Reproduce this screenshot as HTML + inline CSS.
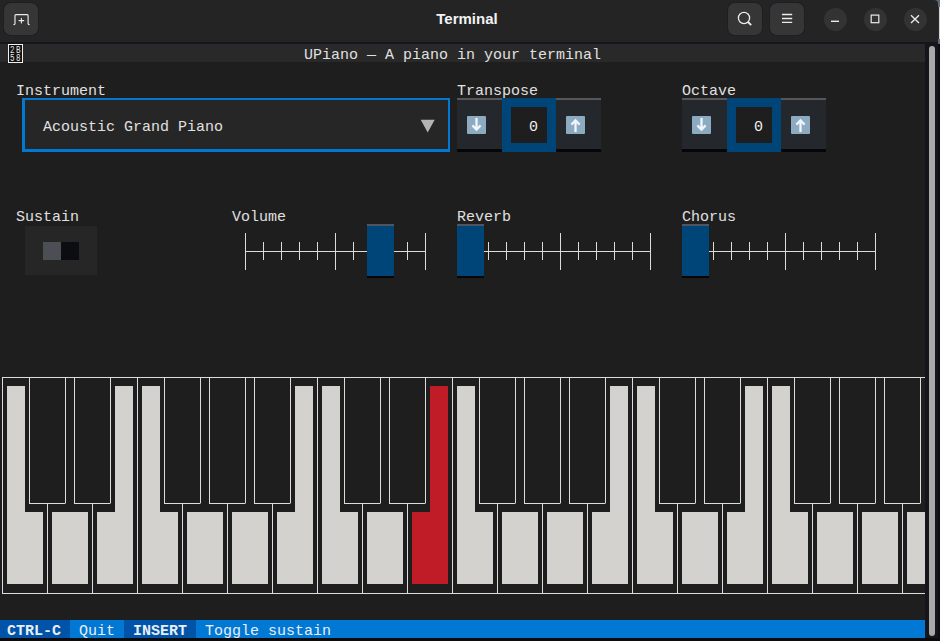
<!DOCTYPE html>
<html><head><meta charset="utf-8"><style>
html,body{margin:0;padding:0;width:940px;height:641px;overflow:hidden;background:#1a1d26}
body>div,body>svg{position:absolute}
.t{position:absolute;font-family:"Liberation Mono",monospace;font-size:15px;line-height:18px;white-space:pre}
.hex{position:absolute;font-family:"Liberation Mono",monospace;font-size:10.5px;line-height:10px;color:#e6e6e6;transform:scaleX(0.72);transform-origin:0 0}
.title{position:absolute;left:0;top:0.3px;width:934px;height:37px;line-height:37px;text-align:center;font-family:"Liberation Sans",sans-serif;font-weight:bold;font-size:15px;color:#f2f2f2}
</style></head><body>

<div style="left:0;top:0;width:940px;height:641px;background:#0e0d12"></div>
<div style="left:900px;top:0;width:40px;height:44px;background:#5a6878"></div>
<div style="left:938px;top:7px;width:1px;height:32px;background:#2a2a30"></div>
<div style="left:939px;top:7px;width:1px;height:32px;background:#cfcfcf"></div>
<div style="left:0;top:0;width:938px;height:42px;background:#242424;border-top-right-radius:4px"></div>
<div style="left:0;top:42px;width:938px;height:2px;background:#17141f"></div>
<div style="left:4px;top:3px;width:34px;height:32px;border-radius:7px;background:#363636;box-shadow:0 0 0 1px #1f1d26"></div>
<svg style="position:absolute;left:0;top:0" width="940" height="44">
 <g fill="none" stroke="#ececec" stroke-width="1.3" stroke-linecap="round">
  <path d="M13.9 24.6 Q15 24.6 15 23.6 V15.6 Q15 14.6 16 14.6 H27.1 Q28.1 14.6 28.1 15.6 V23.6 Q28.1 24.6 29.2 24.6" stroke-width="1.15"/>
  <path d="M21.4 18.2 V23 M19 20.6 H23.8" stroke-width="1.1"/>
 </g>
</svg>
<div style="left:728px;top:3px;width:34px;height:32px;border-radius:7px;background:#363636;box-shadow:0 0 0 1px #1f1d26"></div>
<div style="left:770px;top:3px;width:34px;height:32px;border-radius:7px;background:#363636;box-shadow:0 0 0 1px #1f1d26"></div>
<div style="left:823.5px;top:7.5px;width:23px;height:23px;border-radius:50%;background:#333333"></div>
<div style="left:863.5px;top:7.5px;width:23px;height:23px;border-radius:50%;background:#333333"></div>
<div style="left:903.5px;top:7.5px;width:23px;height:23px;border-radius:50%;background:#333333"></div>
<svg style="position:absolute;left:0;top:0" width="940" height="44">
 <g fill="none" stroke="#ececec" stroke-width="1.3">
  <circle cx="744" cy="18" r="5.6"/>
  <path d="M748 22 L751.2 25.2" stroke-width="1.8"/>
  <path d="M782 14.5 H792.2 M782 18.5 H792.2 M782 22.4 H792.2" stroke-width="1.4"/>
  <path d="M831 21.3 H839" stroke-width="1.4"/>
  <rect x="871.2" y="15.1" width="7.6" height="7.6" stroke-width="1.2"/>
  <path d="M911 15.2 L919 23 M919 15.2 L911 23" stroke-width="1.3"/>
 </g>
</svg>
<div class="title">Terminal</div>

<div style="left:0px;top:44px;width:925px;height:594px;background:#1e1e1e;"></div>
<div style="left:0px;top:638px;width:938px;height:3px;background:#0b0a0d;"></div>
<div style="left:925px;top:44px;width:13px;height:594px;background:#16141c;"></div>
<div style="left:929px;top:46px;width:6px;height:590px;background:#a9a9a9;border-radius:3px;"></div>
<div style="left:0px;top:44px;width:925px;height:18px;background:#292929;"></div>
<div style="left:8px;top:44px;width:13px;height:17px;border:1px solid #f0f0f0;background:#111"></div>
<div class="hex" style="left:9.6px;top:45px">2</div>
<div class="hex" style="left:15.9px;top:45px">B</div>
<div class="hex" style="left:9.6px;top:53px">5</div>
<div class="hex" style="left:15.9px;top:53px">8</div>
<div class="t" style="left:304px;top:47px;color:#e0e0e0;">UPiano — A piano in your terminal</div>
<div class="t" style="left:16px;top:83px;color:#e0e0e0;">Instrument</div>
<div class="t" style="left:457px;top:83px;color:#e0e0e0;">Transpose</div>
<div class="t" style="left:682px;top:83px;color:#e0e0e0;">Octave</div>
<div style="left:22px;top:98px;width:428px;height:54px;background:#0178d4;"></div>
<div style="left:25px;top:100px;width:423px;height:49px;background:#262626;"></div>
<div class="t" style="left:43px;top:119px;color:#e0e0e0;">Acoustic Grand Piano</div>
<svg style="position:absolute;left:0;top:0" width="940" height="200"><path d="M420.7 119.7 H434.7 L427.7 132.6 Z" fill="#b4b4b4"/></svg>
<div style="left:457px;top:98px;width:45px;height:2px;background:#55575b;"></div>
<div style="left:457px;top:100px;width:45px;height:49px;background:#24272c;"></div>
<div style="left:457px;top:149px;width:45px;height:3px;background:#050608;"></div>
<div style="left:556px;top:98px;width:45px;height:2px;background:#55575b;"></div>
<div style="left:556px;top:100px;width:45px;height:49px;background:#24272c;"></div>
<div style="left:556px;top:149px;width:45px;height:3px;background:#050608;"></div>
<div style="left:502px;top:98px;width:54px;height:54px;background:#004578;"></div>
<div style="left:511px;top:107px;width:36px;height:36px;background:#1e1e1e;"></div>
<div class="t" style="left:529px;top:119px;color:#f0f0f0;">0</div>
<div style="left:467px;top:116px;width:19px;height:18px;background:#8dabc0;border-radius:1px"></div>
<svg style="position:absolute;left:0;top:0" width="940" height="200"><path d="M476.5 118 V129 M472.4 125.4 L476.5 129.7 L480.6 125.4" fill="none" stroke="#eef5fb" stroke-width="2.3" stroke-linejoin="miter"/></svg>
<div style="left:566px;top:116px;width:19px;height:18px;background:#8dabc0;border-radius:1px"></div>
<svg style="position:absolute;left:0;top:0" width="940" height="200"><path d="M575.5 132 V121 M571.4 124.6 L575.5 120.3 L579.6 124.6" fill="none" stroke="#eef5fb" stroke-width="2.3" stroke-linejoin="miter"/></svg>
<div style="left:682px;top:98px;width:45px;height:2px;background:#55575b;"></div>
<div style="left:682px;top:100px;width:45px;height:49px;background:#24272c;"></div>
<div style="left:682px;top:149px;width:45px;height:3px;background:#050608;"></div>
<div style="left:781px;top:98px;width:45px;height:2px;background:#55575b;"></div>
<div style="left:781px;top:100px;width:45px;height:49px;background:#24272c;"></div>
<div style="left:781px;top:149px;width:45px;height:3px;background:#050608;"></div>
<div style="left:727px;top:98px;width:54px;height:54px;background:#004578;"></div>
<div style="left:736px;top:107px;width:36px;height:36px;background:#1e1e1e;"></div>
<div class="t" style="left:754px;top:119px;color:#f0f0f0;">0</div>
<div style="left:692px;top:116px;width:19px;height:18px;background:#8dabc0;border-radius:1px"></div>
<svg style="position:absolute;left:0;top:0" width="940" height="200"><path d="M701.5 118 V129 M697.4 125.4 L701.5 129.7 L705.6 125.4" fill="none" stroke="#eef5fb" stroke-width="2.3" stroke-linejoin="miter"/></svg>
<div style="left:791px;top:116px;width:19px;height:18px;background:#8dabc0;border-radius:1px"></div>
<svg style="position:absolute;left:0;top:0" width="940" height="200"><path d="M800.5 132 V121 M796.4 124.6 L800.5 120.3 L804.6 124.6" fill="none" stroke="#eef5fb" stroke-width="2.3" stroke-linejoin="miter"/></svg>
<div class="t" style="left:16px;top:209px;color:#e0e0e0;">Sustain</div>
<div class="t" style="left:232px;top:209px;color:#e0e0e0;">Volume</div>
<div class="t" style="left:457px;top:209px;color:#e0e0e0;">Reverb</div>
<div class="t" style="left:682px;top:209px;color:#e0e0e0;">Chorus</div>
<div style="left:25px;top:226px;width:72px;height:49px;background:#262626;"></div>
<div style="left:43px;top:242px;width:18px;height:18px;background:#4b4e54;"></div>
<div style="left:61px;top:242px;width:18px;height:18px;background:#0b0d10;"></div>
<div style="left:245px;top:251px;width:181px;height:1px;background:#dcdcdc;"></div>
<div style="left:245px;top:233px;width:1px;height:37px;background:#dcdcdc;"></div>
<div style="left:263px;top:242px;width:1px;height:18px;background:#dcdcdc;"></div>
<div style="left:281px;top:242px;width:1px;height:18px;background:#dcdcdc;"></div>
<div style="left:299px;top:242px;width:1px;height:18px;background:#dcdcdc;"></div>
<div style="left:317px;top:242px;width:1px;height:18px;background:#dcdcdc;"></div>
<div style="left:335px;top:233px;width:1px;height:37px;background:#dcdcdc;"></div>
<div style="left:353px;top:242px;width:1px;height:18px;background:#dcdcdc;"></div>
<div style="left:371px;top:242px;width:1px;height:18px;background:#dcdcdc;"></div>
<div style="left:389px;top:242px;width:1px;height:18px;background:#dcdcdc;"></div>
<div style="left:407px;top:242px;width:1px;height:18px;background:#dcdcdc;"></div>
<div style="left:425px;top:233px;width:1px;height:37px;background:#dcdcdc;"></div>
<div style="left:367px;top:224px;width:27px;height:2px;background:#4f5560;"></div>
<div style="left:367px;top:226px;width:27px;height:50px;background:#004578;"></div>
<div style="left:367px;top:276px;width:27px;height:2px;background:#050608;"></div>
<div style="left:470px;top:251px;width:181px;height:1px;background:#dcdcdc;"></div>
<div style="left:470px;top:233px;width:1px;height:37px;background:#dcdcdc;"></div>
<div style="left:488px;top:242px;width:1px;height:18px;background:#dcdcdc;"></div>
<div style="left:506px;top:242px;width:1px;height:18px;background:#dcdcdc;"></div>
<div style="left:524px;top:242px;width:1px;height:18px;background:#dcdcdc;"></div>
<div style="left:542px;top:242px;width:1px;height:18px;background:#dcdcdc;"></div>
<div style="left:560px;top:233px;width:1px;height:37px;background:#dcdcdc;"></div>
<div style="left:578px;top:242px;width:1px;height:18px;background:#dcdcdc;"></div>
<div style="left:596px;top:242px;width:1px;height:18px;background:#dcdcdc;"></div>
<div style="left:614px;top:242px;width:1px;height:18px;background:#dcdcdc;"></div>
<div style="left:632px;top:242px;width:1px;height:18px;background:#dcdcdc;"></div>
<div style="left:650px;top:233px;width:1px;height:37px;background:#dcdcdc;"></div>
<div style="left:457px;top:224px;width:27px;height:2px;background:#4f5560;"></div>
<div style="left:457px;top:226px;width:27px;height:50px;background:#004578;"></div>
<div style="left:457px;top:276px;width:27px;height:2px;background:#050608;"></div>
<div style="left:695px;top:251px;width:181px;height:1px;background:#dcdcdc;"></div>
<div style="left:695px;top:233px;width:1px;height:37px;background:#dcdcdc;"></div>
<div style="left:713px;top:242px;width:1px;height:18px;background:#dcdcdc;"></div>
<div style="left:731px;top:242px;width:1px;height:18px;background:#dcdcdc;"></div>
<div style="left:749px;top:242px;width:1px;height:18px;background:#dcdcdc;"></div>
<div style="left:767px;top:242px;width:1px;height:18px;background:#dcdcdc;"></div>
<div style="left:785px;top:233px;width:1px;height:37px;background:#dcdcdc;"></div>
<div style="left:803px;top:242px;width:1px;height:18px;background:#dcdcdc;"></div>
<div style="left:821px;top:242px;width:1px;height:18px;background:#dcdcdc;"></div>
<div style="left:839px;top:242px;width:1px;height:18px;background:#dcdcdc;"></div>
<div style="left:857px;top:242px;width:1px;height:18px;background:#dcdcdc;"></div>
<div style="left:875px;top:233px;width:1px;height:37px;background:#dcdcdc;"></div>
<div style="left:682px;top:224px;width:27px;height:2px;background:#4f5560;"></div>
<div style="left:682px;top:226px;width:27px;height:50px;background:#004578;"></div>
<div style="left:682px;top:276px;width:27px;height:2px;background:#050608;"></div>
<div style="left:2px;top:377px;width:923px;height:1px;background:#dcdcdc;"></div>
<div style="left:2px;top:593px;width:923px;height:1px;background:#dcdcdc;"></div>
<div style="left:7px;top:386px;width:18px;height:198px;background:#d3d2ce;"></div>
<div style="left:7px;top:512px;width:36px;height:72px;background:#d3d2ce;"></div>
<div style="left:52px;top:512px;width:36px;height:72px;background:#d3d2ce;"></div>
<div style="left:115px;top:386px;width:18px;height:198px;background:#d3d2ce;"></div>
<div style="left:97px;top:512px;width:36px;height:72px;background:#d3d2ce;"></div>
<div style="left:142px;top:386px;width:18px;height:198px;background:#d3d2ce;"></div>
<div style="left:142px;top:512px;width:36px;height:72px;background:#d3d2ce;"></div>
<div style="left:187px;top:512px;width:36px;height:72px;background:#d3d2ce;"></div>
<div style="left:232px;top:512px;width:36px;height:72px;background:#d3d2ce;"></div>
<div style="left:295px;top:386px;width:18px;height:198px;background:#d3d2ce;"></div>
<div style="left:277px;top:512px;width:36px;height:72px;background:#d3d2ce;"></div>
<div style="left:2px;top:377px;width:1px;height:217px;background:#dcdcdc;"></div>
<div style="left:137px;top:377px;width:1px;height:217px;background:#dcdcdc;"></div>
<div style="left:47px;top:503px;width:1px;height:90px;background:#dcdcdc;"></div>
<div style="left:92px;top:503px;width:1px;height:90px;background:#dcdcdc;"></div>
<div style="left:182px;top:503px;width:1px;height:90px;background:#dcdcdc;"></div>
<div style="left:227px;top:503px;width:1px;height:90px;background:#dcdcdc;"></div>
<div style="left:272px;top:503px;width:1px;height:90px;background:#dcdcdc;"></div>
<div style="left:29px;top:377px;width:1px;height:127px;background:#dcdcdc;"></div>
<div style="left:65px;top:377px;width:1px;height:126px;background:#dcdcdc;"></div>
<div style="left:29px;top:503px;width:36px;height:1px;background:#dcdcdc;"></div>
<div style="left:65px;top:503px;width:1px;height:1px;background:#6a7f92;"></div>
<div style="left:74px;top:377px;width:1px;height:127px;background:#dcdcdc;"></div>
<div style="left:110px;top:377px;width:1px;height:126px;background:#dcdcdc;"></div>
<div style="left:74px;top:503px;width:36px;height:1px;background:#dcdcdc;"></div>
<div style="left:110px;top:503px;width:1px;height:1px;background:#6a7f92;"></div>
<div style="left:164px;top:377px;width:1px;height:127px;background:#dcdcdc;"></div>
<div style="left:200px;top:377px;width:1px;height:126px;background:#dcdcdc;"></div>
<div style="left:164px;top:503px;width:36px;height:1px;background:#dcdcdc;"></div>
<div style="left:200px;top:503px;width:1px;height:1px;background:#6a7f92;"></div>
<div style="left:209px;top:377px;width:1px;height:127px;background:#dcdcdc;"></div>
<div style="left:245px;top:377px;width:1px;height:126px;background:#dcdcdc;"></div>
<div style="left:209px;top:503px;width:36px;height:1px;background:#dcdcdc;"></div>
<div style="left:245px;top:503px;width:1px;height:1px;background:#6a7f92;"></div>
<div style="left:254px;top:377px;width:1px;height:127px;background:#dcdcdc;"></div>
<div style="left:290px;top:377px;width:1px;height:126px;background:#dcdcdc;"></div>
<div style="left:254px;top:503px;width:36px;height:1px;background:#dcdcdc;"></div>
<div style="left:290px;top:503px;width:1px;height:1px;background:#6a7f92;"></div>
<div style="left:322px;top:386px;width:18px;height:198px;background:#d3d2ce;"></div>
<div style="left:322px;top:512px;width:36px;height:72px;background:#d3d2ce;"></div>
<div style="left:367px;top:512px;width:36px;height:72px;background:#d3d2ce;"></div>
<div style="left:430px;top:386px;width:18px;height:198px;background:#c01c28;"></div>
<div style="left:412px;top:512px;width:36px;height:72px;background:#c01c28;"></div>
<div style="left:457px;top:386px;width:18px;height:198px;background:#d3d2ce;"></div>
<div style="left:457px;top:512px;width:36px;height:72px;background:#d3d2ce;"></div>
<div style="left:502px;top:512px;width:36px;height:72px;background:#d3d2ce;"></div>
<div style="left:547px;top:512px;width:36px;height:72px;background:#d3d2ce;"></div>
<div style="left:610px;top:386px;width:18px;height:198px;background:#d3d2ce;"></div>
<div style="left:592px;top:512px;width:36px;height:72px;background:#d3d2ce;"></div>
<div style="left:317px;top:377px;width:1px;height:217px;background:#dcdcdc;"></div>
<div style="left:452px;top:377px;width:1px;height:217px;background:#dcdcdc;"></div>
<div style="left:362px;top:503px;width:1px;height:90px;background:#dcdcdc;"></div>
<div style="left:407px;top:503px;width:1px;height:90px;background:#dcdcdc;"></div>
<div style="left:497px;top:503px;width:1px;height:90px;background:#dcdcdc;"></div>
<div style="left:542px;top:503px;width:1px;height:90px;background:#dcdcdc;"></div>
<div style="left:587px;top:503px;width:1px;height:90px;background:#dcdcdc;"></div>
<div style="left:344px;top:377px;width:1px;height:127px;background:#dcdcdc;"></div>
<div style="left:380px;top:377px;width:1px;height:126px;background:#dcdcdc;"></div>
<div style="left:344px;top:503px;width:36px;height:1px;background:#dcdcdc;"></div>
<div style="left:380px;top:503px;width:1px;height:1px;background:#6a7f92;"></div>
<div style="left:389px;top:377px;width:1px;height:127px;background:#dcdcdc;"></div>
<div style="left:425px;top:377px;width:1px;height:126px;background:#dcdcdc;"></div>
<div style="left:389px;top:503px;width:36px;height:1px;background:#dcdcdc;"></div>
<div style="left:425px;top:503px;width:1px;height:1px;background:#6a7f92;"></div>
<div style="left:479px;top:377px;width:1px;height:127px;background:#dcdcdc;"></div>
<div style="left:515px;top:377px;width:1px;height:126px;background:#dcdcdc;"></div>
<div style="left:479px;top:503px;width:36px;height:1px;background:#dcdcdc;"></div>
<div style="left:515px;top:503px;width:1px;height:1px;background:#6a7f92;"></div>
<div style="left:524px;top:377px;width:1px;height:127px;background:#dcdcdc;"></div>
<div style="left:560px;top:377px;width:1px;height:126px;background:#dcdcdc;"></div>
<div style="left:524px;top:503px;width:36px;height:1px;background:#dcdcdc;"></div>
<div style="left:560px;top:503px;width:1px;height:1px;background:#6a7f92;"></div>
<div style="left:569px;top:377px;width:1px;height:127px;background:#dcdcdc;"></div>
<div style="left:605px;top:377px;width:1px;height:126px;background:#dcdcdc;"></div>
<div style="left:569px;top:503px;width:36px;height:1px;background:#dcdcdc;"></div>
<div style="left:605px;top:503px;width:1px;height:1px;background:#6a7f92;"></div>
<div style="left:637px;top:386px;width:18px;height:198px;background:#d3d2ce;"></div>
<div style="left:637px;top:512px;width:36px;height:72px;background:#d3d2ce;"></div>
<div style="left:682px;top:512px;width:36px;height:72px;background:#d3d2ce;"></div>
<div style="left:745px;top:386px;width:18px;height:198px;background:#d3d2ce;"></div>
<div style="left:727px;top:512px;width:36px;height:72px;background:#d3d2ce;"></div>
<div style="left:772px;top:386px;width:18px;height:198px;background:#d3d2ce;"></div>
<div style="left:772px;top:512px;width:36px;height:72px;background:#d3d2ce;"></div>
<div style="left:817px;top:512px;width:36px;height:72px;background:#d3d2ce;"></div>
<div style="left:862px;top:512px;width:36px;height:72px;background:#d3d2ce;"></div>
<div style="left:907px;top:512px;width:18px;height:72px;background:#d3d2ce;"></div>
<div style="left:632px;top:377px;width:1px;height:217px;background:#dcdcdc;"></div>
<div style="left:767px;top:377px;width:1px;height:217px;background:#dcdcdc;"></div>
<div style="left:677px;top:503px;width:1px;height:90px;background:#dcdcdc;"></div>
<div style="left:722px;top:503px;width:1px;height:90px;background:#dcdcdc;"></div>
<div style="left:812px;top:503px;width:1px;height:90px;background:#dcdcdc;"></div>
<div style="left:857px;top:503px;width:1px;height:90px;background:#dcdcdc;"></div>
<div style="left:902px;top:503px;width:1px;height:90px;background:#dcdcdc;"></div>
<div style="left:659px;top:377px;width:1px;height:127px;background:#dcdcdc;"></div>
<div style="left:695px;top:377px;width:1px;height:126px;background:#dcdcdc;"></div>
<div style="left:659px;top:503px;width:36px;height:1px;background:#dcdcdc;"></div>
<div style="left:695px;top:503px;width:1px;height:1px;background:#6a7f92;"></div>
<div style="left:704px;top:377px;width:1px;height:127px;background:#dcdcdc;"></div>
<div style="left:740px;top:377px;width:1px;height:126px;background:#dcdcdc;"></div>
<div style="left:704px;top:503px;width:36px;height:1px;background:#dcdcdc;"></div>
<div style="left:740px;top:503px;width:1px;height:1px;background:#6a7f92;"></div>
<div style="left:794px;top:377px;width:1px;height:127px;background:#dcdcdc;"></div>
<div style="left:830px;top:377px;width:1px;height:126px;background:#dcdcdc;"></div>
<div style="left:794px;top:503px;width:36px;height:1px;background:#dcdcdc;"></div>
<div style="left:830px;top:503px;width:1px;height:1px;background:#6a7f92;"></div>
<div style="left:839px;top:377px;width:1px;height:127px;background:#dcdcdc;"></div>
<div style="left:875px;top:377px;width:1px;height:126px;background:#dcdcdc;"></div>
<div style="left:839px;top:503px;width:36px;height:1px;background:#dcdcdc;"></div>
<div style="left:875px;top:503px;width:1px;height:1px;background:#6a7f92;"></div>
<div style="left:884px;top:377px;width:1px;height:127px;background:#dcdcdc;"></div>
<div style="left:920px;top:377px;width:1px;height:126px;background:#dcdcdc;"></div>
<div style="left:884px;top:503px;width:36px;height:1px;background:#dcdcdc;"></div>
<div style="left:920px;top:503px;width:1px;height:1px;background:#6a7f92;"></div>
<div style="left:0px;top:620px;width:925px;height:18px;background:#0178d4;"></div>
<div style="left:-2px;top:620px;width:72px;height:18px;background:#0053a6;"></div>
<div style="left:124px;top:620px;width:72px;height:18px;background:#0053a6;"></div>
<div class="t" style="left:7px;top:623px;color:#e8eef6;font-weight:bold;">CTRL-C</div>
<div class="t" style="left:79px;top:623px;color:#e8eef6;">Quit</div>
<div class="t" style="left:133px;top:623px;color:#e8eef6;font-weight:bold;">INSERT</div>
<div class="t" style="left:205px;top:623px;color:#e8eef6;">Toggle sustain</div>
</body></html>
